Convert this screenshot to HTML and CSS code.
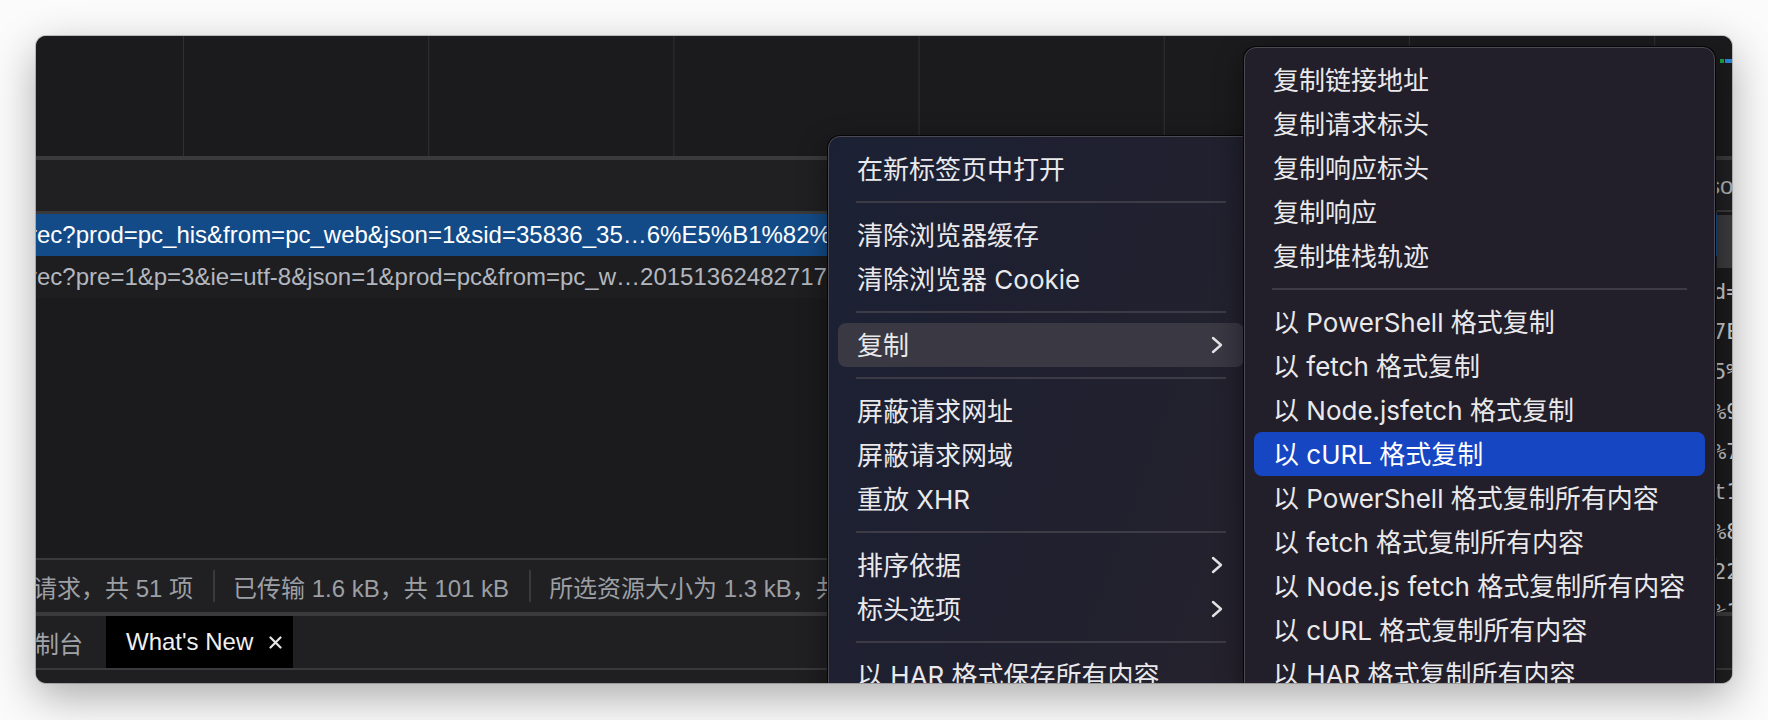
FILE: index.html
```html
<!DOCTYPE html>
<html lang="zh-CN">
<head>
<meta charset="utf-8">
<title>DevTools context menu</title>
<link rel="stylesheet" href="styles.css">
</head>
<body>
<div class="window">
  <div class="overview">
    <span class="ov-bar ov-green"></span>
    <span class="ov-bar ov-blue"></span>
  </div>
  <div class="hdivider"></div>
  <div class="network">
    <div class="list-pane">
      <div class="table-header"></div>
      <div class="hline h3"></div>
      <div class="row selected"><span class="cell">rec?prod=pc_his&amp;from=pc_web&amp;json=1&amp;sid=35836_35…6%E5%B1%82%9B%E5%A4%A9</span></div>
      <div class="row plain"><span class="cell">rec?pre=1&amp;p=3&amp;ie=utf-8&amp;json=1&amp;prod=pc&amp;from=pc_w…20151362482717</span></div>
      <div class="fill"></div>
      <div class="hline h2"></div>
      <div class="status">
        <span class="st first">请求，共 51 项</span>
        <span class="vsep"></span>
        <span class="st">已传输 1.6 kB，共 101 kB</span>
        <span class="vsep"></span>
        <span class="st">所选资源大小为 1.3 kB，共 100 kB</span>
      </div>
    </div>
    <div class="detail-pane">
      <div class="detail-tabs"><span class="dt-text">so</span></div>
      <div class="hline h2"></div>
      <div class="detail-filter"></div>
      <div class="detail-lines">
        <div>d=35836_</div>
        <div>7E5%8F%</div>
        <div>5%A4%8D</div>
        <div>%9C%E7%</div>
        <div>%7B%22q</div>
        <div>t1%22%3</div>
        <div>%8E%E5%</div>
        <div>22%3A%2</div>
        <div>%1A%B3</div>
      </div>
    </div>
  </div>
  <div class="hdivider"></div>
  <div class="drawer-tabs">
    <div class="tab console">控制台</div>
    <div class="tab active">
      <span>What's New</span>
      <svg class="close" width="13" height="13" viewBox="0 0 13 13"><path d="M1.5 1.5 L11.5 11.5 M11.5 1.5 L1.5 11.5" stroke="#e6e6e6" stroke-width="2.2" stroke-linecap="round" fill="none"/></svg>
    </div>
  </div>
  <div class="hline h2"></div>
  <div class="drawer-body"></div>

  <div class="menu menu-main">
    <div class="item">在新标签页中打开</div>
    <div class="sep"></div>
    <div class="item">清除浏览器缓存</div>
    <div class="item">清除浏览器 Cookie</div>
    <div class="sep"></div>
    <div class="item hover"><span>复制</span><svg class="chev" width="12" height="18" viewBox="0 0 12 18"><polyline points="2,2 10,9 2,16" fill="none" stroke="#e4e4e6" stroke-width="2.4" stroke-linecap="round" stroke-linejoin="round"/></svg></div>
    <div class="sep"></div>
    <div class="item">屏蔽请求网址</div>
    <div class="item">屏蔽请求网域</div>
    <div class="item">重放 XHR</div>
    <div class="sep"></div>
    <div class="item"><span>排序依据</span><svg class="chev" width="12" height="18" viewBox="0 0 12 18"><polyline points="2,2 10,9 2,16" fill="none" stroke="#e4e4e6" stroke-width="2.4" stroke-linecap="round" stroke-linejoin="round"/></svg></div>
    <div class="item"><span>标头选项</span><svg class="chev" width="12" height="18" viewBox="0 0 12 18"><polyline points="2,2 10,9 2,16" fill="none" stroke="#e4e4e6" stroke-width="2.4" stroke-linecap="round" stroke-linejoin="round"/></svg></div>
    <div class="sep"></div>
    <div class="item">以 HAR 格式保存所有内容</div>
  </div>

  <div class="menu menu-sub">
    <div class="item">复制链接地址</div>
    <div class="item">复制请求标头</div>
    <div class="item">复制响应标头</div>
    <div class="item">复制响应</div>
    <div class="item">复制堆栈轨迹</div>
    <div class="sep"></div>
    <div class="item">以 PowerShell 格式复制</div>
    <div class="item">以 fetch 格式复制</div>
    <div class="item">以 Node.jsfetch 格式复制</div>
    <div class="item active">以 cURL 格式复制</div>
    <div class="item">以 PowerShell 格式复制所有内容</div>
    <div class="item">以 fetch 格式复制所有内容</div>
    <div class="item">以 Node.js fetch 格式复制所有内容</div>
    <div class="item">以 cURL 格式复制所有内容</div>
    <div class="item">以 HAR 格式复制所有内容</div>
  </div>
</div>
</body>
</html>
```

FILE: styles.css
```css
* { box-sizing: border-box; }
html, body { margin: 0; padding: 0; }
body {
  width: 1768px;
  height: 720px;
  overflow: hidden;
  padding: 36px;
  background: #fbfbfb;
  font-family: "Liberation Sans", "Noto Sans CJK SC", sans-serif;
}

.window {
  position: relative;
  width: 1696px;
  height: 647px;
  border-radius: 10px;
  overflow: hidden;
  background: #1b1b1d;
  display: flex;
  flex-direction: column;
  box-shadow: 0 14px 44px rgba(0, 0, 0, 0.32), 0 0 0 1px rgba(0, 0, 0, 0.2);
}

/* timeline overview */
.overview {
  position: relative;
  flex: none;
  height: 120px;
  background-color: #1b1b1d;
  background-image: linear-gradient(to right, #303033 0 1px, transparent 1px);
  background-size: 245.2px 100%;
  background-position: 147px 0;
}
.ov-bar {
  position: absolute;
  top: 23px;
  height: 4px;
}
.ov-green { left: 1684px; width: 4px; background: #20a046; }
.ov-blue { left: 1689px; width: 8px; background: #2a86db; }

.hdivider {
  flex: none;
  height: 4px;
  background: #3a3a3d;
}
.hline { flex: none; background: #3a3a3c; }
.h2 { height: 2px; }
.h3 { height: 3px; }

/* network panel */
.network {
  flex: 1;
  min-height: 0;
  display: flex;
}
.list-pane {
  flex: 1;
  min-width: 0;
  display: flex;
  flex-direction: column;
  overflow: hidden;
}
.table-header {
  flex: none;
  height: 51px;
  background: #202023;
}
.row {
  flex: none;
  height: 42px;
  line-height: 42px;
  font-size: 24px;
  white-space: nowrap;
}
.row .cell { margin-left: -7px; }
.row.selected { background: #134b88; color: #ffffff; }
.row.plain { background: #1e1e20; color: #b3b7bf; }
.fill { flex: 1; background: #1b1b1d; }

.status {
  flex: none;
  height: 52px;
  display: flex;
  align-items: center;
  background: #202023;
  color: #9c9fa4;
  font-size: 24px;
  white-space: nowrap;
}
.st.first { margin-left: -3px; }
.vsep {
  flex: none;
  width: 2px;
  height: 32px;
  margin: 0 18px 0 20px;
  background: #3a3a3c;
}

.detail-pane {
  flex: none;
  width: 15px;
  display: flex;
  flex-direction: column;
  overflow: hidden;
  background: #1b1b1d;
}
.detail-tabs {
  flex: none;
  height: 50px;
  line-height: 52px;
  background: #202023;
  color: #b0b3b8;
  font-size: 24px;
  white-space: nowrap;
}
.dt-text { margin-left: -9px; }
.detail-filter {
  flex: none;
  height: 53px;
  margin-top: 3px;
  background: #3b3b3e;
}
.detail-lines {
  padding-top: 4px;
  margin-left: -4px;
  font-family: "DejaVu Sans Mono", monospace;
  font-size: 22px;
  line-height: 40px;
  color: #c5c7cc;
  white-space: nowrap;
}

/* drawer */
.drawer-tabs {
  flex: none;
  height: 52px;
  display: flex;
  background: #202023;
  font-size: 24px;
  white-space: nowrap;
}
.tab {
  display: flex;
  align-items: center;
}
.tab.console {
  margin-left: -45px;
  padding: 0 23px 0 20px;
  color: #a0a3a8;
}
.tab.active {
  gap: 16px;
  padding: 0 11px 0 20px;
  background: #000000;
  color: #f0f0f0;
}
.close { display: block; }
.drawer-body {
  flex: none;
  height: 13px;
  background: #1f1f21;
}

/* context menus */
.menu {
  position: absolute;
  padding: 10px 9px;
  border: 1px solid #4b4952;
  border-radius: 12px;
  box-shadow: 0 0 0 1px #060606, 0 10px 30px rgba(0, 0, 0, 0.45);
  font-family: Inter, "Noto Sans CJK SC", sans-serif;
  font-size: 26px;
  color: #e9e9ec;
}
.menu-main {
  left: 792px;
  top: 100px;
  width: 426px;
  background: linear-gradient(110deg, #1b2134 0%, #1f2030 45%, #25222c 100%);
}
.menu-sub {
  left: 1208px;
  top: 11px;
  width: 471px;
  background: #231f2a;
}
.item {
  height: 44px;
  display: flex;
  align-items: center;
  justify-content: space-between;
  padding: 0 21px 4px 19px;
  border-radius: 8px;
  white-space: nowrap;
}
.item .chev { margin-top: 4px; }
.item.hover { background: #393843; }
.item.active { background: #1746c3; color: #ffffff; }
.chev { display: block; flex: none; }
.sep {
  height: 2px;
  margin: 10px 18px;
  background: #3d3b45;
}
```
